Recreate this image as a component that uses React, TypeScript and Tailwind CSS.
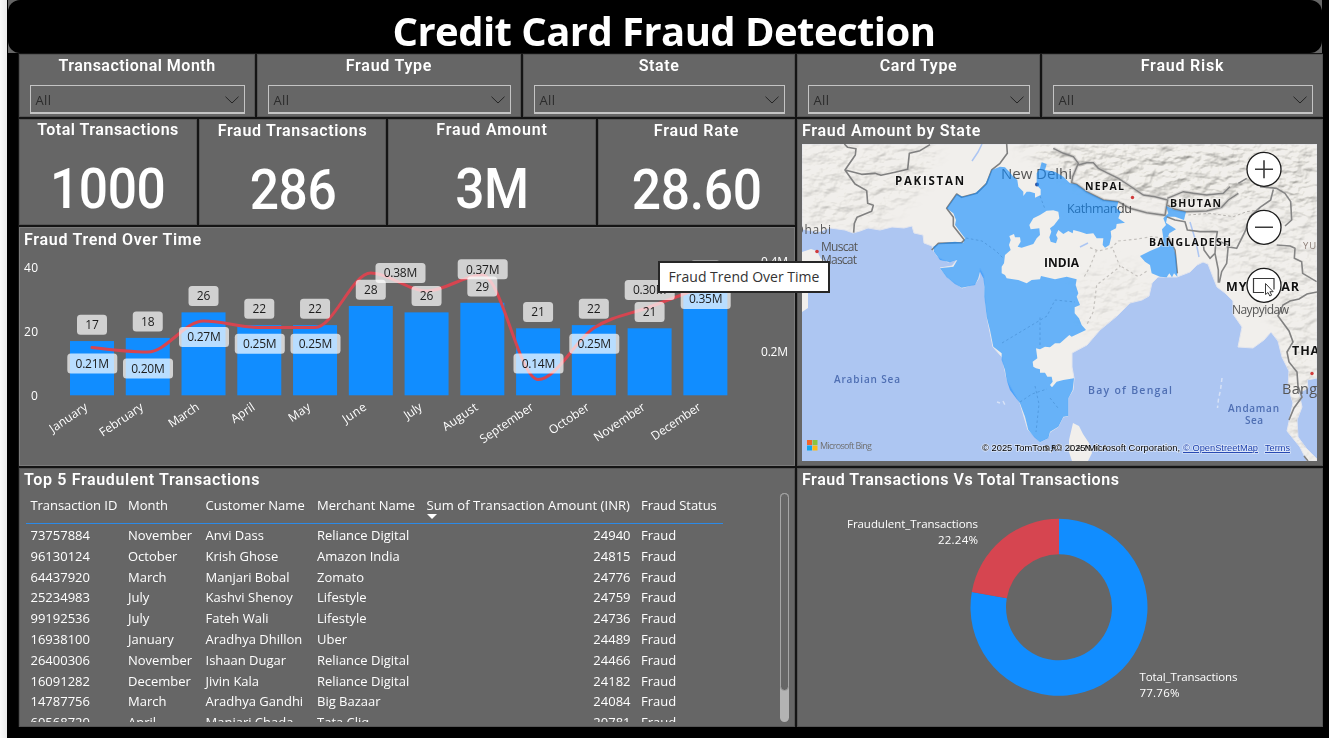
import React from "react";

const SANS = "font-['Open_Sans','Noto_Sans',sans-serif]";
const DIN = "font-['Roboto','Inter',sans-serif]";
const SEGOE = "'Open Sans','Noto Sans',sans-serif";

function PanelTitle({ children, className = "" }: { children: React.ReactNode; className?: string }) {
  return (
    <div className={`${DIN} whitespace-nowrap text-[16px] leading-[20px] font-semibold text-white ${className}`}>
      {children}
    </div>
  );
}

function Slicer({ title, width, tracking }: { title: string; width: string; tracking: string }) {
  return (
    <section className={`flex h-full flex-col border border-[#555] bg-[#666] ${width}`}>
      <PanelTitle className={`mt-px text-center ${tracking}`}>{title}</PanelTitle>
      <div className="mx-[9.500px] mt-[9px] flex h-[29px] items-center justify-between border border-b-2 border-[#c4c4c4] pr-[5px] pl-[5px]">
        <span className={`${SANS} pt-[4px] text-[13px] tracking-[0.4px] text-[#2b2b2b]`}>All</span>
        <svg width="14" height="8" viewBox="0 0 14 8" fill="none" stroke="#252525" strokeWidth="1" className="mt-[2px]">
          <path d="M0.5 0.7 7 7 13.5 0.7" />
        </svg>
      </div>
    </section>
  );
}

function Kpi({
  title, value, width, pad, titleTrack, valueTrack,
}: { title: string; value: string; width: string; pad: string; titleTrack: string; valueTrack: string }) {
  return (
    <section className={`flex h-full flex-col items-center border border-[#555] bg-[#666] ${width} ${pad}`}>
      <PanelTitle className={titleTrack}>{title}</PanelTitle>
      <div className={`${DIN} mt-[19px] origin-center scale-x-[0.92] text-[56px] leading-[60px] font-[480] text-white ${valueTrack}`}>{value}</div>
    </section>
  );
}

const months = ["January", "February", "March", "April", "May", "June", "July", "August", "September", "October", "November", "December"];
const labelLen = [43, 50, 34, 26, 24, 26, 19, 40, 62, 46, 59, 57];
const counts = [17, 18, 26, 22, 22, 28, 26, 29, 21, 22, 21, 34];
const lineY = [347.5, 352, 321, 327.5, 327.5, 273, 291, 275, 379.5, 328, 307, 286];
const tags: [number, number, string][] = [
  [92.3, 353.5, "0.21M"], [148, 358.5, "0.20M"], [204, 327, "0.27M"], [259.8, 333.7, "0.25M"],
  [315.5, 333.7, "0.25M"], [400.5, 263, "0.38M"], [482.7, 259.3, "0.37M"], [538.5, 353.5, "0.14M"],
  [594.3, 333.7, "0.25M"], [649.7, 280, "0.30M"], [705.7, 289, "0.35M"],
];
const cx = (i: number) => 92 + 55.76 * i;

function monotonePath(ys: number[]) {
  const h = 55.76;
  const s = ys.slice(1).map((y, i) => (y - ys[i]) / h);
  const m = ys.map((_, i) => {
    if (i === 0 || i === ys.length - 1) return 0;
    const a = s[i - 1], b = s[i];
    if (a * b <= 0) return 0;
    return Math.sign(a) * 2 * Math.min(Math.abs(a), Math.abs(b), 0.5 * Math.abs((a + b) / 2));
  });
  m[0] = (3 * s[0] - m[1]) / 2;
  const n = ys.length - 1;
  m[n] = (3 * s[n - 1] - m[n - 1]) / 2;
  let d = `M${cx(0)} ${ys[0]}`;
  for (let i = 0; i < n; i++) {
    d += `C${cx(i) + h / 3} ${ys[i] + (m[i] * h) / 3} ${cx(i + 1) - h / 3} ${ys[i + 1] - (m[i + 1] * h) / 3} ${cx(i + 1)} ${ys[i + 1]}`;
  }
  return d;
}

function TrendChart() {
  return (
    <svg width="774" height="214" viewBox="20 250 774 214" fontFamily={SEGOE} fontSize="12" className="block">
      {counts.map((c, i) => (
        <rect key={i} x={cx(i) - 22} y={395.3 - c * 3.19} width="44" height={c * 3.19} fill="#118dff" />
      ))}
      <path d={monotonePath(lineY)} fill="none" stroke="#d64550" strokeWidth="3" strokeLinecap="round" />
      {counts.map((c, i) => (
        <g key={i}>
          <rect x={cx(i) - 15} y={369 - c * 3.19} width="30" height="20" rx="3.5" fill="#fff" fillOpacity="0.7" />
          <text x={cx(i)} y={383.4 - c * 3.19} textAnchor="middle" textLength="13.5" fill="#1c1c1c">{c}</text>
        </g>
      ))}
      {tags.map(([x, y, t], i) => (
        <g key={i}>
          <rect x={x - 25} y={y} width="50" height="20" rx="3.5" fill="#fff" fillOpacity="0.7" />
          <text x={x} y={y + 14.4} textAnchor="middle" textLength="33.5" fill="#1c1c1c">{t}</text>
        </g>
      ))}
      <g fill="#fff" fontSize="12" fontWeight="500">
        <text x="24" y="272" textLength="14">40</text>
        <text x="24" y="336" textLength="14">20</text>
        <text x="31" y="400">0</text>
        <text x="761" y="266" textLength="27">0.4M</text>
        <text x="761" y="356" textLength="27">0.2M</text>
        {months.map((m, i) => (
          <text key={m} transform={`translate(${cx(i) - 3.5} 409) rotate(-34)`} textAnchor="end" textLength={labelLen[i]}>{m}</text>
        ))}
      </g>
    </svg>
  );
}

const LAND =
  "M802 144H1317V378L1307 380 1308 388 1299 393 1302 407 1297 420 1298 437 1306 448 1317 459V461H1307L1300 447 1287 431 1290 417 1293 403 1288 387 1289 371 1282 357 1278 341 1271 332 1264 340 1253 348 1238 347 1242 327 1233 314 1233 301 1225 293 1217 287 1213 277 1208 264 1203 262 1197 265 1190 272 1177 277 1158 277 1152 283 1149 296 1142 300 1130 303 1117 316 1100 330 1087 345 1072 353 1072 367 1074 378 1073 390 1068 398 1068 416 1063 417 1058 427 1050 432 1048 438 1040 442 1028 430 1020 403 1007 380 1002 357 993 347 987 317 985 297 984 275 980 268 979 278 975 284 962 288 955 283 948 278 940 268 952 266 957 260 948 262 938 257 933 250 932 246 924 243 923 235 914 233 912 226 904 228 892 227 880 230 868 228 860 231 853 233 845 230 830 228 818 232 802 229Z";

function Relief() {
  return (
    <filter id="relief" x="0" y="0" width="100%" height="100%" colorInterpolationFilters="sRGB">
      <feTurbulence type="fractalNoise" baseFrequency="0.06 0.1" numOctaves="4" seed="8" result="n" />
      <feDiffuseLighting in="n" surfaceScale="2.6" lightingColor="#fff" result="l">
        <feDistantLight azimuth="235" elevation="62" />
      </feDiffuseLighting>
      <feColorMatrix in="l" type="matrix" values="0.85 0 0 0 0.23  0.85 0 0 0 0.23  0.85 0 0 0 0.22  0 0 0 1 0" />
    </filter>
  );
}

function FraudMap() {
  return (
    <svg width="515" height="317" viewBox="802 144 515 317" fontFamily={SEGOE} className="block">
      <defs>
        <Relief />
        <filter id="soft"><feGaussianBlur stdDeviation="7" /></filter>
        <clipPath id="land"><path d={LAND} /></clipPath>
        <mask id="hills">
          <g filter="url(#soft)" fill="#fff">
            <path d="M802 144H905L890 205 885 225H802Z" fillOpacity="0.5" />
            <path d="M1015 144H1317V225L1270 200 1190 205 1130 195 1075 180Z" />
            <path d="M1190 215 1317 200V461H1290L1280 330 1235 270Z" fillOpacity="0.5" />
            <path d="M1075 280 1130 260 1150 290 1090 340Z" fillOpacity="0.3" />
            <path d="M900 144 940 144 925 185 895 215Z" fillOpacity="0.5" />
          </g>
        </mask>
      </defs>
      <rect x="802" y="144" width="515" height="317" fill="#adc6f2" />
      <path d={LAND} fill="#f1efec" stroke="#e4e6ee" strokeWidth="1" />
      <g clipPath="url(#land)" mask="url(#hills)" className="mix-blend-multiply">
        <rect x="802" y="144" width="515" height="317" filter="url(#relief)" />
      </g>
      <path d="M802 252 811 249 817 251 821 259 830 264 830 274 820 285 808 293 808 308 802 312Z" fill="#f1efec" />
      <path d="M1073 423 1079 426 1083 434 1089 443 1092 453 1088 461H1072L1069 452 1069 440Z" fill="#f1efec" />
      <path d="M1222 378l-1.500 12-2 9-1 9M1003 401l2 4M997 402l3 1" fill="none" stroke="#d6e1f6" strokeWidth="1.500" strokeDasharray="4 3" />
      <path d="M972 161l6-9 4-8M1190 222l6 20 3 15M1080 247l8-4" fill="none" stroke="#adc6f2" strokeWidth="1.500" />
      <g transform="translate(930 150) scale(0.33333)" fill="none">
        <path d="M480 293l25 10 40-10 20-20 50-5 50-8 40 5M500 300l-20 50-20 35M550 300l20 50-70 55-10 80-20 40M575 350l50 30 30-20" stroke="#c4c1bd" strokeWidth="3.500" strokeDasharray="8 8" />
        <path d="M370-5 400 10 430 20 445 40 428 80 425 98 440 103 470 125 520 150 565 155 600 175 650 188 705 196 713 150 675 140 640 135 600 108 565 85 530 68 505 55 490 38 470 38 445 45M712 145 760 125 790 130 830 135 880 130 900 110M713 166 735 178 768 185 830 183 875 172 895 150 925 130" stroke="#b2b0ad" strokeWidth="11" opacity="0.4" />
        <path d="M370-5 400 10 430 20 445 40 428 80 425 98 440 103 470 125 520 150 565 155 600 175 650 188 705 196 713 150 675 140 640 135 600 108 565 85 530 68 505 55 490 38 470 38 445 45M712 145 760 125 790 130 830 135 880 130 900 110M713 166 735 178 768 185 830 183 875 172 895 150 925 130" stroke="#858585" strokeWidth="4.500" />
      </g>
      <g transform="translate(795 120) scale(0.33333)" fill="none" stroke="#808080" strokeWidth="4.800" strokeLinejoin="round">
        <path d="M148 72 158 82 183 86 181 105 150 150 180 192 215 212 218 250 235 256 230 274 186 292 178 310 176 338M150 150 200 163 240 160 258 166 300 157 338 148 343 100 375 92 405 74" />
        <path d="M635 72 637 100 615 130 590 150 575 190 545 220 500 232 485 222 455 265 475 292 475 318 508 360 500 368 430 370 410 390" />
      </g>
      <g transform="translate(1060 120) scale(0.33333)" fill="none" stroke="#858585" strokeWidth="4.800" strokeLinejoin="round">
        <path d="M535 190 560 175M600 200 650 205 675 220 692 245 695 300 675 318M640 208 632 240 600 262 570 290 555 335 530 385 500 380" />
        <path d="M320 290 345 300 375 305 382 330 420 335 472 335 468 360 505 375 500 430 485 455 478 488M325 350 345 390 352 460M468 360 465 400 450 415 432 390 430 372M465 400 475 450 475 488" />
        <path d="M650 375 690 378 705 385 703 415 725 425 728 460 770 485" />
        <path d="M385 285 450 280 520 290 560 275 600 270" stroke="#b5b2ae" strokeWidth="3" strokeDasharray="8 7" />
      </g>
      <path d="M1317 292 1307 294 1299 299 1290 301 1283 305 1278 316 1289 331 1293 342 1287 352 1289 362 1297 372 1298 386 1302 397 1294 408 1289 420M1304 456 1308 461" fill="none" stroke="#808080" strokeWidth="1.600" />
      <circle cx="1037" cy="184.500" r="2" fill="#33519b" />
      <text x="1001" y="179" fontSize="15" fill="#555" textLength="71">New Delhi</text>
      <text x="1067" y="213" fontSize="12.500" fill="#444" textLength="65">Kathmandu</text>
      <g transform="translate(930 150) scale(0.33333)" fill="#118dff" fillOpacity="0.62">
        <path d="M50 175 80 133 100 140 135 130 165 105 185 60 210 50 225 52 238 65 250 80 262 90 265 110 280 125 280 138 290 125 300 125 315 130 315 143 332 135 332 118 320 105 320 70 330 55 335 37 350 42 345 60 375 65 400 80 420 100 440 103 470 125 520 150 565 155 560 175 572 185 565 205 585 218 560 222 558 235 542 243 544 260 538 285 525 293 518 285 520 265 500 265 490 250 470 252 450 245 430 240 428 250 415 243 400 252 385 240 378 255 383 265 378 280 362 275 358 262 364 245 360 235 372 226 388 205 385 185 370 181 350 182 330 195 310 205 298 225 302 238 328 235 330 255 320 265 310 282 275 293 263 290 272 275 270 262 255 262 252 252 238 258 242 270 237 285 242 300 225 315 222 340 215 350 215 370 225 375 230 385 265 390 290 400 305 390 330 388 333 378 375 388 410 380 440 388 437 405 445 430 440 440 450 465 434 472 434 490 447 505 455 525 468 540 425 560 418 555 390 580 375 580 360 592 345 590 330 598 318 595 322 625 308 635 310 650 318 655 330 658 330 668 345 668 352 680 365 680 368 695 360 705 366 712 380 695 400 690 432 685 428 720 415 745 415 798 400 800 385 830 360 845 355 865 330 877 313 862 295 840 285 800 270 760 240 720 230 690 225 660 215 630 215 610 190 590 180 540 170 500 163 440 163 410 160 385 150 365 145 385 135 405 95 413 75 402 50 382 30 355 70 350 82 330 60 337 30 330 12 305 10 290 30 280 75 275 100 278 105 265 75 225 78 210 70 190Z" />
        <path d="M708 168 735 180 768 185 762 210 735 200 712 200 708 218 738 238 718 250 710 270 730 290 738 320 742 380 732 370 726 382 718 370 710 382 690 380 665 370 660 345 645 335 630 318 660 303 690 290 700 265 696 238 708 225 700 205 715 190Z" />
      </g>
      <path d="M966 238l16 3 14 10 8 8M1002 343l20-12 25-15 8-16 20 2M1040 345v-30M1020 402l12-8 15-5M1035 386l4 18-3 28M1040 196l5 13M1050 398l8 10" fill="none" stroke="#3d84c8" strokeWidth="1" strokeDasharray="2.500 2.500" opacity="0.5" />
      <g fill="#111" fontWeight="700" fontSize="11.500" stroke="#fff" strokeWidth="2" strokeOpacity="0.35" paintOrder="stroke">
        <text x="895" y="185" textLength="69">PAKISTAN</text>
        <text x="1044" y="267" textLength="35" fontSize="12">INDIA</text>
        <text x="1085" y="190" textLength="39" fontSize="10.500">NEPAL</text>
        <text x="1170" y="207" textLength="51" fontSize="10.500">BHUTAN</text>
        <text x="1149" y="246" textLength="82" fontSize="10.500">BANGLADESH</text>
        <text x="1226" y="291" textLength="73" fontSize="12.500">MYANMAR</text>
        <text x="1292" y="355" fontSize="12.500" letterSpacing="0.900">THAILAND</text>
      </g>
      <g fill="#565656" fontSize="12" fontWeight="500">
        <text x="795" y="234" textLength="36">Dhabi</text>
        <text x="821" y="251" textLength="37">Muscat</text>
        <text x="821" y="263.500" textLength="36">Mascat</text>
        <text x="1232" y="314" textLength="57">Naypyidaw</text>
        <text x="1282" y="394" fontSize="14.500" textLength="60">Bangkok</text>
        <text x="1303" y="249" fontSize="9.500" fill="#8d7f78" letterSpacing="1">YU</text>
      </g>
      <g fill="#d13b3b">
        <circle cx="817" cy="251.500" r="1.800" />
        <circle cx="1132.500" cy="197.500" r="1.700" />
        <circle cx="1312" cy="373.500" r="1.700" />
      </g>
      <g fill="#4f6fb3" fontSize="10" fontWeight="600">
        <text x="834" y="383" textLength="66">Arabian Sea</text>
        <text x="1088" y="394" textLength="84" fontSize="10.500">Bay of Bengal</text>
        <text x="1228" y="412" textLength="51">Andaman</text>
        <text x="1245" y="424" textLength="18">Sea</text>
      </g>
      <rect x="807" y="440" width="5" height="5" fill="#f2652a" />
      <rect x="812.500" y="440" width="5" height="5" fill="#8cc43e" />
      <rect x="807" y="445.500" width="5" height="5" fill="#12a5ee" />
      <rect x="812.500" y="445.500" width="5" height="5" fill="#fdb913" />
      <text x="820" y="448.500" fontSize="9" fill="#707070" textLength="52">Microsoft Bing</text>
      <text x="1044" y="451" fontSize="9" fontWeight="700" fill="#222" textLength="64">SRI LANKA</text>
      <g fontFamily="'Liberation Sans',Arial,sans-serif" fontSize="9.300" fill="#000" stroke="#fff" strokeWidth="1.500" strokeOpacity="0.55" paintOrder="stroke">
        <text x="982" y="451" textLength="198" lengthAdjust="spacingAndGlyphs">© 2025 TomTom, © 2025 Microsoft Corporation,</text>
        <g fill="#1a3fae" textDecoration="underline">
          <text x="1183" y="451" textLength="75" lengthAdjust="spacingAndGlyphs">© OpenStreetMap</text>
          <text x="1265" y="451" textLength="25" lengthAdjust="spacingAndGlyphs">Terms</text>
        </g>
      </g>
      <g fill="#fff" stroke="#1b1b1b" strokeWidth="1.300">
        <circle cx="1264" cy="169.300" r="17" />
        <circle cx="1264" cy="227.300" r="17" />
        <circle cx="1264" cy="285.300" r="17" />
      </g>
      <g fill="none" stroke="#3a3a3a" strokeWidth="1.600">
        <path d="M1255 169.300h18M1264 160.300v18M1255 227.300h18" />
        <path d="M1264 292.500h-10.500v-14h20.500v11" strokeWidth="1.200" />
        <path d="M1265.500 283.500v11l2.500-2 1.800 3.500 1.800-0.900-1.700-3.400h3.300z" fill="#fff" strokeWidth="1" />
      </g>
    </svg>
  );
}

const cols = [
  { t: "Transaction ID", w: "w-[97.500px]", k: "tracking-[-0.05px]" },
  { t: "Month", w: "w-[77.500px]", k: "tracking-[0px]" },
  { t: "Customer Name", w: "w-[111.500px]", k: "tracking-[0px]" },
  { t: "Merchant Name", w: "w-[109.500px]", k: "tracking-[0px]" },
  { t: "Sum of Transaction Amount (INR)", w: "w-[214.500px]", k: "tracking-[0.06px]" },
  { t: "Fraud Status", w: "w-[85px]", k: "tracking-[-0.05px]" },
];
const rows = [
  ["73757884", "November", "Anvi Dass", "Reliance Digital", "24940"],
  ["96130124", "October", "Krish Ghose", "Amazon India", "24815"],
  ["64437920", "March", "Manjari Bobal", "Zomato", "24776"],
  ["25234983", "July", "Kashvi Shenoy", "Lifestyle", "24759"],
  ["99192536", "July", "Fateh Wali", "Lifestyle", "24736"],
  ["16938100", "January", "Aradhya Dhillon", "Uber", "24489"],
  ["26400306", "November", "Ishaan Dugar", "Reliance Digital", "24466"],
  ["16091282", "December", "Jivin Kala", "Reliance Digital", "24182"],
  ["14787756", "March", "Aradhya Gandhi", "Big Bazaar", "24084"],
  ["60568729", "April", "Manjari Chada", "Tata Cliq", "20781"],
];

function TransactionTable() {
  return (
    <div className="flex h-[234px] justify-between pr-[5px] pl-[6px]">
      <div className={`${SANS} h-[232px] w-[697px] overflow-hidden text-[13px] font-[450] whitespace-nowrap text-white`}>
        <div className="flex h-[34px] border-b border-[#2b8ae8] pt-[2px] pl-[4.500px]">
          {cols.map((c, i) => (
            <div key={c.t} className={`shrink-0 leading-[26px] ${c.w} ${c.k}`}>
              {c.t}
              {i === 4 && (
                <svg width="10" height="5" viewBox="0 0 10 5" className="-mt-[4px] block" fill="#fff">
                  <path d="M0 0h10L5 5z" />
                </svg>
              )}
            </div>
          ))}
        </div>
        <div>
          {rows.map((r) => (
            <div key={r[0]} className="flex h-[20.800px] pl-[4.500px] leading-[22px]">
              {r.map((v, i) => (
                <div key={i} className={`shrink-0 ${cols[i].w} ${i === 4 ? "pr-[10.500px] text-right" : ""}`}>{v}</div>
              ))}
              <div>Fraud</div>
            </div>
          ))}
        </div>
      </div>
      <div className="mt-[3px] h-[229px] w-[9px] rounded-full bg-[#b3b3b3]">
        <div className="h-[198px] rounded-full border border-[#a6a6a6] bg-[#666]" />
      </div>
    </div>
  );
}

function Donut() {
  const a = -0.2224 * 2 * Math.PI;
  const px = (r: number) => 1059 + r * Math.sin(a);
  const py = (r: number) => 607.3 - r * Math.cos(a);
  return (
    <svg width="523" height="234" viewBox="798 490 523 234" className="block" fontFamily={SEGOE} fontSize="11.500" fontWeight="450" fill="#fff">
      <path d={`M1059 518.800A88.500 88.500 0 1 1 ${px(88.5)} ${py(88.5)}L${px(53)} ${py(53)}A53 53 0 1 0 1059 554.300Z`} fill="#118dff" />
      <path d={`M${px(88.5)} ${py(88.5)}A88.500 88.500 0 0 1 1059 518.800V554.300A53 53 0 0 0 ${px(53)} ${py(53)}Z`} fill="#d64550" />
      <text x="847" y="528" textLength="131">Fraudulent_Transactions</text>
      <text x="938" y="543.700" textLength="40">22.24%</text>
      <text x="1139.500" y="681" textLength="98">Total_Transactions</text>
      <text x="1139.500" y="696.700" textLength="40">77.76%</text>
    </svg>
  );
}

export default function App() {
  return (
    <div className="relative flex h-[738px] w-[1329px] overflow-hidden bg-black">
      <div className="h-full w-[7px] shrink-0 bg-gradient-to-r from-[#fafafa] to-[#ececec]" />
      <div className="flex flex-1 flex-col">
        <div className="ml-px w-[1314px] bg-[#666]">
          <header className={`${SANS} flex h-[53px] items-center justify-center rounded-[12px] bg-black pt-[8px] pr-[2px] text-[40px] font-bold text-white`}>
            <h1 className="tracking-[-0.55px] whitespace-nowrap">Credit Card Fraud Detection</h1>
          </header>
        </div>
        <main className="ml-[11px] flex w-[1305px] flex-col gap-[2px] bg-[#141414] pt-px pl-px">
          <div className="flex h-[63px] gap-[2px]">
            <Slicer title="Transactional Month" width="w-[236px]" tracking="tracking-[0.48px]" />
            <Slicer title="Fraud Type" width="w-[264px]" tracking="tracking-[0.75px]" />
            <Slicer title="State" width="w-[272px]" tracking="tracking-[0.6px]" />
            <Slicer title="Card Type" width="w-[243px]" tracking="tracking-[0.6px]" />
            <Slicer title="Fraud Risk" width="w-[281px]" tracking="tracking-[0.8px]" />
          </div>
          <div className="flex gap-[2px]">
            <div className="flex w-[776px] flex-col gap-[2px]">
              <div className="flex h-[106px] gap-[2px]">
                <Kpi title="Total Transactions" value="1000" width="w-[178px]" pad="" titleTrack="tracking-[0.5px]" valueTrack="tracking-[-0.5px]" />
                <Kpi title="Fraud Transactions" value="286" width="w-[187px]" pad="pt-px" titleTrack="tracking-[0.68px]" valueTrack="tracking-[-0.5px]" />
                <Kpi title="Fraud Amount" value="3M" width="w-[208px]" pad="" titleTrack="tracking-[0.85px]" valueTrack="tracking-[-0.5px]" />
                <Kpi title="Fraud Rate" value="28.60" width="w-[197px]" pad="pt-px" titleTrack="tracking-[0.8px]" valueTrack="tracking-[-0.3px]" />
              </div>
              <section className="h-[239px] border border-[#7a7a7a] bg-[#666]">
                <PanelTitle className="mt-[2px] ml-[4px] tracking-[0.7px]">Fraud Trend Over Time</PanelTitle>
                <TrendChart />
              </section>
              <section className="h-[259px] border border-[#555] bg-[#666]">
                <PanelTitle className="mt-px ml-[4px] tracking-[0.65px]">Top 5 Fraudulent Transactions</PanelTitle>
                <TransactionTable />
              </section>
            </div>
            <div className="flex w-[526px] flex-col gap-[2px]">
              <section className="h-[347px] border border-[#555] bg-[#666]">
                <PanelTitle className="mt-px ml-[4px] pb-[3px] tracking-[0.73px]">Fraud Amount by State</PanelTitle>
                <div className="ml-[4px]"><FraudMap /></div>
              </section>
              <section className="h-[259px] border border-[#555] bg-[#666]">
                <PanelTitle className="mt-px ml-[4px] tracking-[0.53px]">Fraud Transactions Vs Total Transactions</PanelTitle>
                <Donut />
              </section>
            </div>
          </div>
        </main>
      </div>
      <div className={`${SANS} absolute top-[261px] left-[658px] flex h-[32px] w-[172px] items-center justify-center border-2 border-[#262626] bg-white pb-px text-[14px] whitespace-nowrap text-[#333]`}>
        Fraud Trend Over Time
      </div>
    </div>
  );
}
